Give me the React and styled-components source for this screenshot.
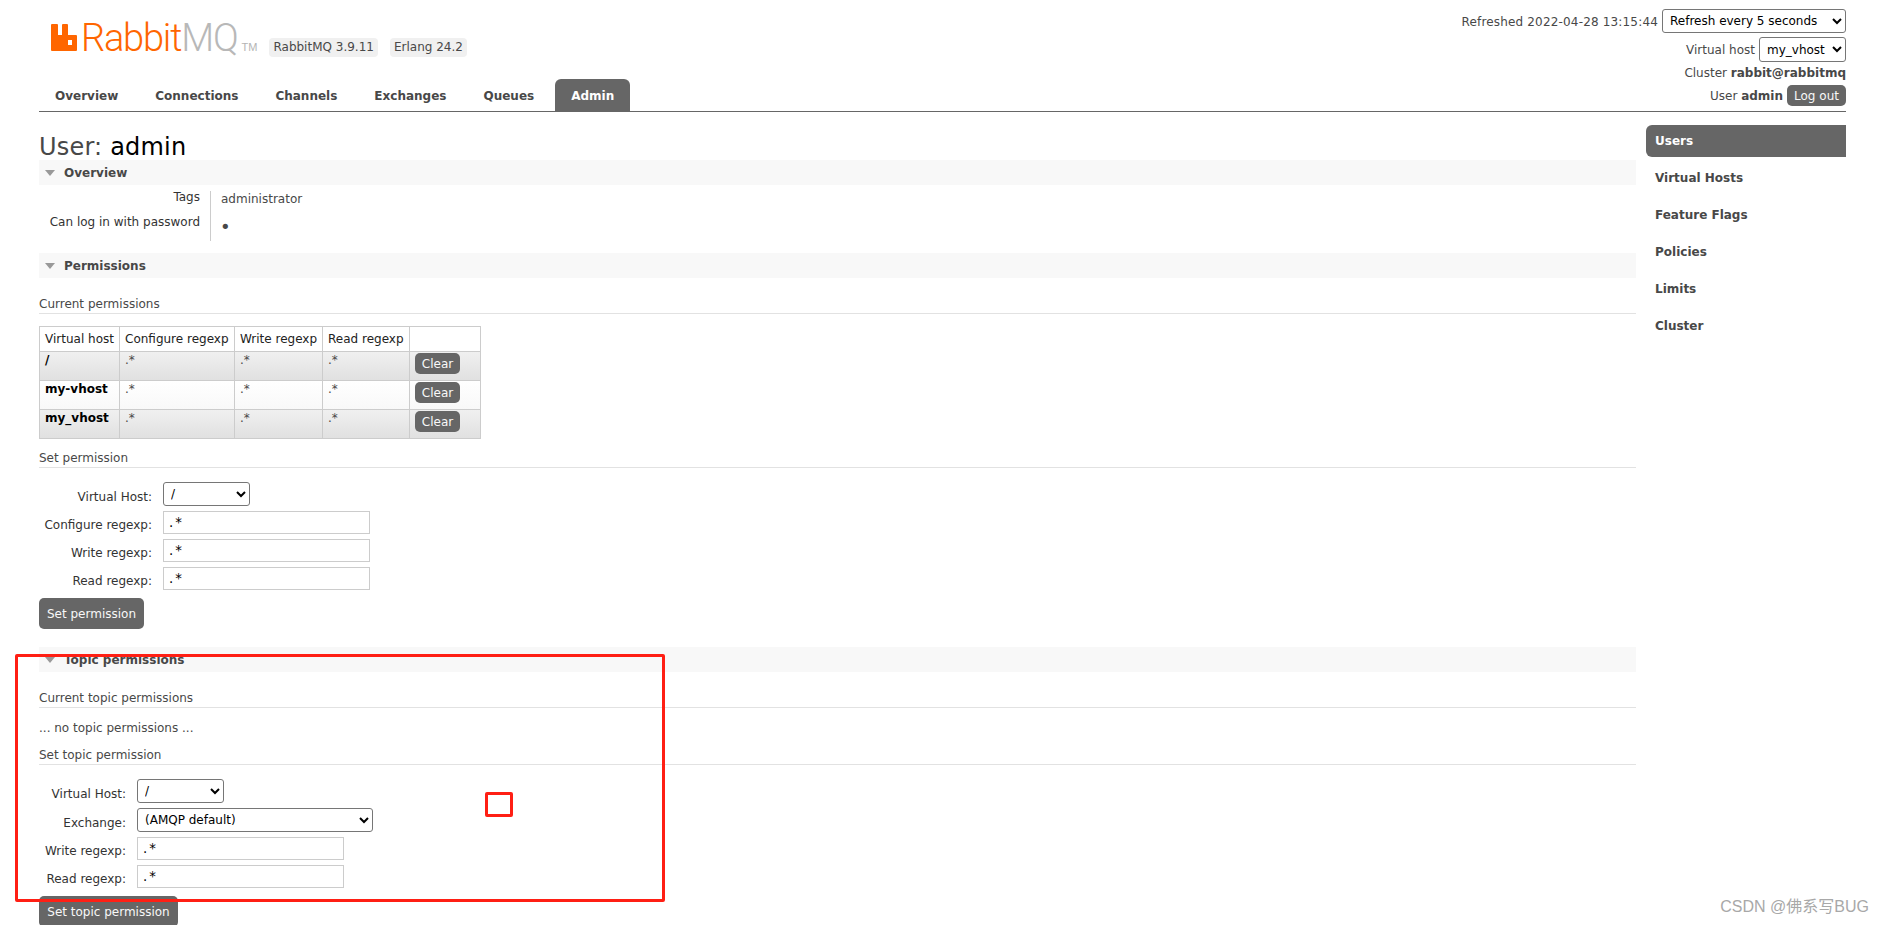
import React from 'react'
import styled, { createGlobalStyle } from 'styled-components'

const GlobalStyle = createGlobalStyle`
  html, body { margin: 0; padding: 0; height: 925px; overflow: hidden; background: #fff; }
  body { font: 12px "DejaVu Sans", Verdana, sans-serif; color: #484848; }
`

const Page = styled.div`
  position: relative;
  width: 1884px;
  height: 925px;
  overflow: hidden;
  padding: 0 38px 0 39px;
  box-sizing: border-box;
`

const Header = styled.header`
  display: flex;
  justify-content: space-between;
  height: 112px;
  box-sizing: border-box;
  border-bottom: 1px solid #666;
`

const HeaderLeft = styled.div`
  display: flex;
  flex-direction: column;
  padding-top: 24px;
`

const LogoRow = styled.div`
  display: flex;
  align-items: flex-start;
  padding-left: 12px;
  height: 27px;
`

const LogoText = styled.span`
  font: 300 38px/29px Roboto, sans-serif;
  letter-spacing: -1.2px;
  margin-left: ${(props) => props.$gap}px;
  height: 27px;
  color: ${(props) => props.$color};
`

const LogoTm = styled.span`
  font: 400 11px/11px "Liberation Sans", sans-serif;
  color: #b4b4b4;
  margin: 18px 0 0 4px;
  width: 15px;
`

const Badge = styled.span`
  background: #f0f0f0;
  border-radius: 4px;
  height: 19px;
  line-height: 19px;
  padding: 0 4px;
  margin: 14px 0 0 ${(props) => props.$gap}px;
`

const Tabs = styled.nav`
  display: flex;
  margin-top: auto;
  padding-left: 0;
  gap: 5px;
`

const Tab = styled.a`
  height: 32px;
  line-height: 34px;
  padding: 0 16px;
  font-weight: bold;
  border-radius: 6px 6px 0 0;
  color: ${(props) => (props.$active ? '#fff' : '#484848')};
  background: ${(props) => (props.$active ? '#666' : 'transparent')};
`

const HeaderRight = styled.div`
  display: flex;
  flex-direction: column;
  align-items: flex-end;
  padding-top: 9px;
`

const HeaderRow = styled.div`
  display: flex;
  align-items: center;
  gap: ${(props) => props.$gap || 0}px;
  margin-top: ${(props) => props.$top || 0}px;
  white-space: pre;
`

const RefreshedText = styled.span`
  padding-top: 2px;
  letter-spacing: 0.17px;
`

const HeaderSelect = styled.select`
  font: 12px "DejaVu Sans", Verdana, sans-serif;
  color: #000;
  background: #fff;
  border: 1px solid #767676;
  border-radius: 3px;
  padding-left: 3px;
  height: ${(props) => props.$height}px;
  width: ${(props) => props.$width}px;
`

const LogoutButton = styled.button`
  font: 12px "DejaVu Sans", Verdana, sans-serif;
  color: #f8f8f8;
  background: #666;
  border: 0;
  border-radius: 5px;
  height: 21px;
  width: 59px;
  padding: 0;
`

const Body = styled.div`
  display: flex;
  gap: 10px;
`

const Content = styled.main`
  width: 1597px;
`

const Title = styled.h1`
  font-size: 24px;
  font-weight: normal;
  line-height: 28px;
  letter-spacing: 0.2px;
  margin: 0;
  padding-top: 21px;
  height: 48px;
  box-sizing: border-box;
  color: #484848;
  b { font-weight: normal; color: #000; }
`

const SectionBar = styled.h2`
  display: flex;
  align-items: center;
  gap: 9px;
  height: 25px;
  margin: 0;
  padding-left: 6px;
  background: #f8f8f8;
  font-size: 12px;
  font-weight: bold;
  color: #484848;
`

const Caret = styled.i`
  width: 0;
  height: 0;
  border-left: 5.5px solid transparent;
  border-right: 5.5px solid transparent;
  border-top: 6px solid #999;
`

const Facts = styled.div`
  display: grid;
  grid-template-columns: 172px 1fr;
  grid-auto-rows: 25px;
  margin: 6px 0 12px;
`

const FactLabel = styled.div`
  text-align: right;
  padding-right: 10px;
  border-right: 1px solid #ccc;
  color: #333;
  line-height: 12px;
`

const FactValue = styled.div`
  padding: 1px 0 0 10px;
  line-height: 14px;
`

const Bullet = styled.span`
  font-size: 18px;
  line-height: 20px;
  margin-left: -1px;
`

const SubHeading = styled.h3`
  font-size: 12px;
  font-weight: normal;
  height: 18px;
  line-height: 18px;
  margin: ${(props) => props.$top}px 0 0;
  border-bottom: 1px solid #e2e2e2;
  box-sizing: content-box;
  color: #484848;
`

const Table = styled.table`
  border-collapse: collapse;
  table-layout: fixed;
  width: 441px;
  margin-top: 12px;
  th, td { border: 1px solid #ccc; padding: 0 5px; text-align: left; vertical-align: top; }
  th { font-weight: normal; height: 24px; vertical-align: middle; color: #222; white-space: nowrap; }
  td { height: 27px; line-height: 14px; padding-top: 1px; }
  td b { color: #000; }
`

const Row = styled.tr`
  background: ${(props) => (props.$alt ? 'linear-gradient(#f0f0f0, #e0e0e0)' : 'linear-gradient(#fff, #f8f8f8)')};
`

const SmallButton = styled.button`
  display: block;
  font: 12px "DejaVu Sans", Verdana, sans-serif;
  color: #f8f8f8;
  background: #666;
  border: 0;
  border-radius: 5px;
  height: 21px;
  width: 45px;
  padding: 0;
`

const Form = styled.div`
  display: grid;
  grid-template-columns: ${(props) => props.$label}px auto;
  justify-content: start;
  align-items: center;
  column-gap: 11px;
  row-gap: 5px;
  margin-top: 14px;
`

const FormLabel = styled.label`
  text-align: right;
  padding-top: 5px;
  color: #333;
`

const FormSelect = styled.select`
  font: 12px "DejaVu Sans", Verdana, sans-serif;
  color: #000;
  background: #fff;
  border: 1px solid #767676;
  border-radius: 3px;
  padding-left: 3px;
  height: 24px;
  width: ${(props) => props.$width}px;
`

const FormInput = styled.input`
  font: 13.3px "DejaVu Sans", Verdana, sans-serif;
  letter-spacing: 2px;
  color: #000;
  border: 1px solid #ccc;
  border-radius: 0;
  width: 207px;
  height: 23px;
  padding: 0 5px;
  box-sizing: border-box;
  outline: none;
`

const SubmitButton = styled.button`
  display: block;
  font: 12px "DejaVu Sans", Verdana, sans-serif;
  color: #f8f8f8;
  background: #666;
  border: 0;
  border-radius: 5px;
  height: 31px;
  padding: 0;
  width: ${(props) => props.$width}px;
  margin: 8px 0 18px;
`

const EmptyNote = styled.p`
  margin: 12px 0 0;
  height: 16px;
  line-height: 16px;
`

const Sidebar = styled.aside`
  width: 200px;
  padding-top: 13px;
`

const SideItem = styled.a`
  display: block;
  height: 32px;
  line-height: 32px;
  padding-left: 9px;
  margin-bottom: 5px;
  font-weight: bold;
  border-radius: 6px 0 0 6px;
  color: ${(props) => (props.$active ? '#fff' : '#484848')};
  background: ${(props) => (props.$active ? '#666' : 'transparent')};
`

const Annotation = styled.div`
  position: absolute;
  left: ${(props) => props.$x}px;
  top: ${(props) => props.$y}px;
  width: ${(props) => props.$w}px;
  height: ${(props) => props.$h}px;
  border: 3px solid #ff1f14;
  border-radius: 2px;
  box-sizing: border-box;
`

const Watermark = styled.div`
  position: absolute;
  right: 15px;
  top: 897px;
  font: 16px/20px "Liberation Sans", "Noto Sans CJK SC", sans-serif;
  color: #a8a8a8;
`

const RabbitMark = () => (
  <svg width="26" height="27" viewBox="0 0 26 27">
    <path
      fillRule="evenodd"
      fill="#f60"
      d="M1 0h5a1 1 0 0 1 1 1v10h4V1a1 1 0 0 1 1-1h4a1 1 0 0 1 1 1v10h8a1 1 0 0 1 1 1v14a1 1 0 0 1-1 1H1a1 1 0 0 1-1-1V1a1 1 0 0 1 1-1zM17 16v5h4v-5z"
    />
  </svg>
)

const tabs = ['Overview', 'Connections', 'Channels', 'Exchanges', 'Queues', 'Admin']
const sideLinks = ['Users', 'Virtual Hosts', 'Feature Flags', 'Policies', 'Limits', 'Cluster']
const permissions = ['/', 'my-vhost', 'my_vhost']

const App = () => {
  return (
    <Page>
      <GlobalStyle />
      <Header>
        <HeaderLeft>
          <LogoRow>
            <RabbitMark />
            <LogoText $color="#f60" $gap={4}>Rabbit</LogoText>
            <LogoText $color="#b8b8b8" $gap={0}>MQ</LogoText>
            <LogoTm>TM</LogoTm>
            <Badge $gap={13}>RabbitMQ 3.9.11</Badge>
            <Badge $gap={12}>Erlang 24.2</Badge>
          </LogoRow>
          <Tabs>
            {tabs.map((t) => (
              <Tab key={t} $active={t === 'Admin'}>{t}</Tab>
            ))}
          </Tabs>
        </HeaderLeft>
        <HeaderRight>
          <HeaderRow $gap={4}>
            <RefreshedText>Refreshed 2022-04-28 13:15:44</RefreshedText>
            <HeaderSelect $width={184} $height={24} defaultValue="5">
              <option value="5">Refresh every 5 seconds</option>
            </HeaderSelect>
          </HeaderRow>
          <HeaderRow $gap={4} $top={4}>
            Virtual host
            <HeaderSelect $width={87} $height={25} defaultValue="my_vhost">
              <option value="my_vhost">my_vhost</option>
            </HeaderSelect>
          </HeaderRow>
          <HeaderRow $top={4}>
            Cluster <b>rabbit@rabbitmq</b>
          </HeaderRow>
          <HeaderRow $gap={4} $top={5}>
            <span>User <b>admin</b></span>
            <LogoutButton>Log out</LogoutButton>
          </HeaderRow>
        </HeaderRight>
      </Header>

      <Body>
        <Content>
          <Title>User: <b>admin</b></Title>

          <SectionBar><Caret />Overview</SectionBar>
          <Facts>
            <FactLabel>Tags</FactLabel>
            <FactValue>administrator</FactValue>
            <FactLabel>Can log in with password</FactLabel>
            <FactValue><Bullet>•</Bullet></FactValue>
          </Facts>

          <SectionBar><Caret />Permissions</SectionBar>
          <SubHeading $top={17}>Current permissions</SubHeading>
          <Table>
            <colgroup>
              <col width="80" />
              <col width="115" />
              <col width="88" />
              <col width="87" />
              <col width="71" />
            </colgroup>
            <thead>
              <tr>
                <th>Virtual host</th>
                <th>Configure regexp</th>
                <th>Write regexp</th>
                <th>Read regexp</th>
                <th></th>
              </tr>
            </thead>
            <tbody>
              {permissions.map((vhost, i) => (
                <Row key={vhost} $alt={i % 2 === 0}>
                  <td><b>{vhost}</b></td>
                  <td>.*</td>
                  <td>.*</td>
                  <td>.*</td>
                  <td><SmallButton>Clear</SmallButton></td>
                </Row>
              ))}
            </tbody>
          </Table>

          <SubHeading $top={10}>Set permission</SubHeading>
          <Form $label={113}>
            <FormLabel>Virtual Host:</FormLabel>
            <FormSelect $width={87} defaultValue="/"><option value="/">/</option></FormSelect>
            <FormLabel>Configure regexp:</FormLabel>
            <FormInput defaultValue=".*" />
            <FormLabel>Write regexp:</FormLabel>
            <FormInput defaultValue=".*" />
            <FormLabel>Read regexp:</FormLabel>
            <FormInput defaultValue=".*" />
          </Form>
          <SubmitButton $width={105}>Set permission</SubmitButton>

          <SectionBar><Caret />Topic permissions</SectionBar>
          <SubHeading $top={17}>Current topic permissions</SubHeading>
          <EmptyNote>... no topic permissions ...</EmptyNote>
          <SubHeading $top={10}>Set topic permission</SubHeading>
          <Form $label={87}>
            <FormLabel>Virtual Host:</FormLabel>
            <FormSelect $width={87} defaultValue="/"><option value="/">/</option></FormSelect>
            <FormLabel>Exchange:</FormLabel>
            <FormSelect $width={236} defaultValue="amq"><option value="amq">(AMQP default)</option></FormSelect>
            <FormLabel>Write regexp:</FormLabel>
            <FormInput defaultValue=".*" />
            <FormLabel>Read regexp:</FormLabel>
            <FormInput defaultValue=".*" />
          </Form>
          <SubmitButton $width={139}>Set topic permission</SubmitButton>
        </Content>

        <Sidebar>
          {sideLinks.map((s) => (
            <SideItem key={s} $active={s === 'Users'}>{s}</SideItem>
          ))}
        </Sidebar>
      </Body>

      <Annotation $x={15} $y={654} $w={650} $h={248} />
      <Annotation $x={485} $y={792} $w={28} $h={25} />
      <Watermark>CSDN @佛系写BUG</Watermark>
    </Page>
  )
}

export default App
